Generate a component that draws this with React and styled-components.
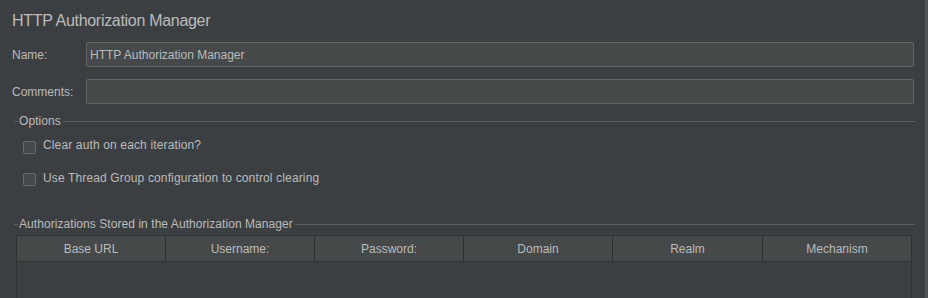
import React from "react";
import styled, {createGlobalStyle} from "styled-components";

const GlobalStyle = createGlobalStyle`
  html, body {
    margin: 0;
    padding: 0;
    background: #3c3f41;
  }
  body {
    font-family: "Liberation Sans", Arial, sans-serif;
    font-size: 12px;
    color: #bbbbbb;
  }
`;

const Page = styled.div`
  display: flex;
  height: 298px;
  overflow: hidden;
  background: #3c3f41;
`;

const Main = styled.div`
  flex: 1;
  display: flex;
  flex-direction: column;
  padding: 11px 11px 0 12px;
  min-width: 0;
`;

const Divider = styled.div`
  width: 3px;
  background: #505355;
`;

const Title = styled.div`
  font-size: 16px;
  line-height: 20px;
  letter-spacing: -0.3px;
  color: #bbbbbb;
`;

const FieldRow = styled.div`
  display: flex;
  align-items: center;
  margin-top: ${(p) => p.$gap}px;
`;

const Label = styled.label`
  width: 74px;
  line-height: 14px;
`;

const Input = styled.div`
  flex: 1;
  height: 23px;
  box-sizing: content-box;
  display: flex;
  align-items: center;
  padding: 0 3px;
  background: #45494a;
  border: 1px solid #646464;
  border-radius: 2px;
  line-height: 14px;
  color: #bbbbbb;
`;

const GroupHeader = styled.div`
  display: flex;
  align-items: center;
  margin: ${(p) => p.$top}px -1px 0 2px;
  height: 14px;
  line-height: 14px;
  letter-spacing: 0.06px;

  &::before {
    content: "";
    width: 4px;
    height: 1px;
    background: #5b5e60;
  }
  &::after {
    content: "";
    flex: 1;
    height: 1px;
    background: #5b5e60;
  }
  span {
    padding: 0 2px 0 1px;
  }
`;

const CheckRow = styled.label`
  display: flex;
  align-items: flex-start;
  gap: 7px;
  margin: ${(p) => p.$top}px 0 0 11px;
  line-height: 14px;
  letter-spacing: 0.14px;
`;

const Box = styled.span`
  width: 11px;
  height: 11px;
  margin-top: 2.5px;
  border: 1px solid #6b6b6b;
  border-radius: 2px;
  background: #43494a;
`;

const Table = styled.div`
  margin: 4px 2px 0 4px;
  flex: 1;
  border: 1px solid #2f3133;
  border-bottom: none;
  background: #3c3f41;
`;

const HeaderRow = styled.div`
  display: grid;
  grid-template-columns: 148px 149px 149px 149px 150px 1fr;
  height: 25px;
  background: #45494a;
  border-bottom: 1px solid #2f3133;
`;

const HeaderCell = styled.div`
  display: flex;
  align-items: center;
  justify-content: center;
  border-left: ${(p) => (p.$first ? "none" : "1px solid #2f3133")};
  padding-top: 1px;
`;

const columns = ["Base URL", "Username:", "Password:", "Domain", "Realm", "Mechanism"];

export default function App() {
  return (
    <>
      <GlobalStyle />
      <Page>
        <Main>
          <Title>HTTP Authorization Manager</Title>
          <FieldRow $gap={11}>
            <Label>Name:</Label>
            <Input>HTTP Authorization Manager</Input>
          </FieldRow>
          <FieldRow $gap={12}>
            <Label>Comments:</Label>
            <Input />
          </FieldRow>
          <GroupHeader $top={10}>
            <span>Options</span>
          </GroupHeader>
          <CheckRow $top={10}>
            <Box />
            <span>Clear auth on each iteration?</span>
          </CheckRow>
          <CheckRow $top={17}>
            <Box />
            <span>Use Thread Group configuration to control clearing</span>
          </CheckRow>
          <GroupHeader $top={31}>
            <span>Authorizations Stored in the Authorization Manager</span>
          </GroupHeader>
          <Table>
            <HeaderRow>
              {columns.map((c, i) => (
                <HeaderCell key={c} $first={i === 0}>
                  {c}
                </HeaderCell>
              ))}
            </HeaderRow>
          </Table>
        </Main>
        <Divider />
      </Page>
    </>
  );
}
